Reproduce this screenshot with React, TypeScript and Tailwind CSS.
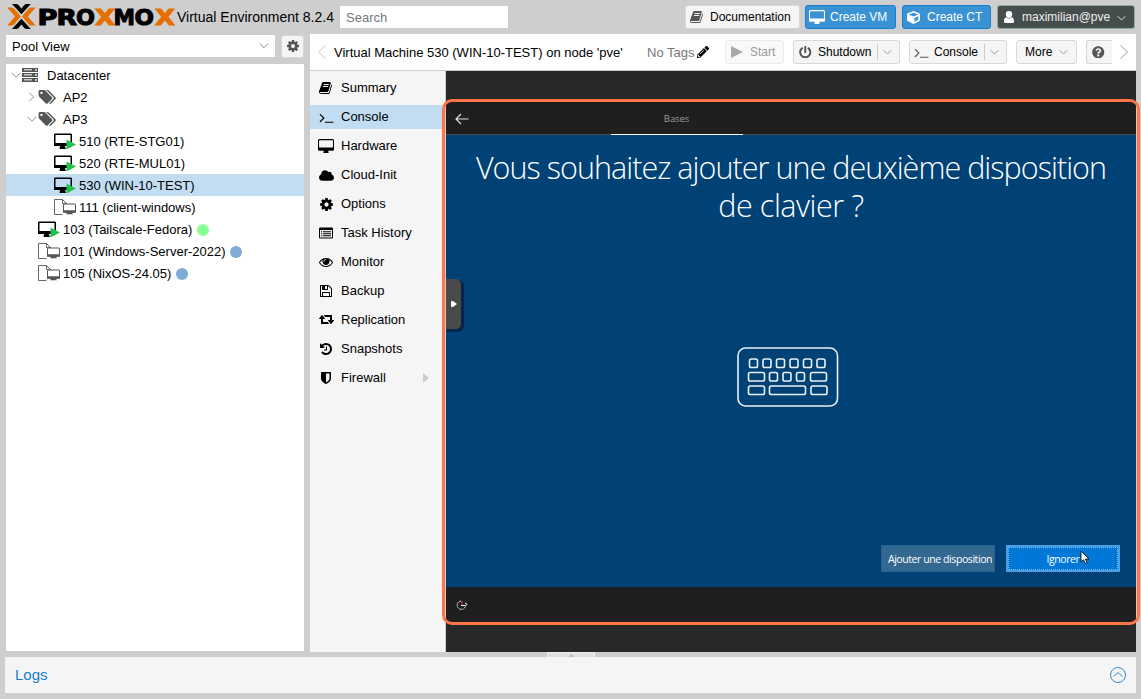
import React from "react";
import { FaCloud, FaCube, FaPencilAlt, FaPowerOff, FaQuestionCircle } from "react-icons/fa";

const PATHS = {
  book: "M1639 478q40 57 18 129l-275 906q-19 64-76.5 107.5t-122.5 43.5h-923q-77 0-148.5-53.5t-99.5-131.5q-24-67-2-127 0-4 3-27t4-37q1-8-3-21.5t-3-19.5q2-11 8-21t16.5-23.5 16.5-23.5q23-38 45-91.5t30-91.5q3-10 .5-30t-.5-28q3-11 17-28t17-23q21-36 42-92t25-90q1-9-2.5-32t.5-28q4-13 22-30.5t22-22.5q19-26 42.5-84.5t27.5-96.5q1-8-3-25.5t-2-26.5q2-8 9-18t18-23 17-21q8-12 16.5-30.5t15-35 16-36 19.5-32 26.5-23.5 36-11.5 47.5 5.5l-1 3q38-9 51-9h761q74 0 114 56t18 130l-274 906q-36 119-71.5 153.5t-128.5 34.5h-869q-27 0-38 15-11 16-1 43 24 70 144 70h923q29 0 56-15.5t35-41.5l300-987q7-22 5-57 38 15 59 43zm-1064 2q-4 13 2 22.5t20 9.5h608q13 0 25.5-9.5t16.5-22.5l21-64q4-13-2-22.5t-20-9.5h-608q-13 0-25.5 9.5t-16.5 22.5zm-83 256q-4 13 2 22.5t20 9.5h608q13 0 25.5-9.5t16.5-22.5l21-64q4-13-2-22.5t-20-9.5h-608q-13 0-25.5 9.5t-16.5 22.5z",
  terminal: "M649 983l-466 466q-10 10-23 10t-23-10l-50-50q-10-10-10-23t10-23l393-393-393-393q-10-10-10-23t10-23l50-50q10-10 23-10t23 10l466 466q10 10 10 23t-10 23zm1079 457v64q0 14-9 23t-23 9h-960q-14 0-23-9t-9-23v-64q0-14 9-23t23-9h960q14 0 23 9t9 23z",
  desktop: "M1728 992v-832q0-13-9.5-22.5t-22.5-9.5h-1600q-13 0-22.5 9.5t-9.5 22.5v832q0 13 9.5 22.5t22.5 9.5h1600q13 0 22.5-9.5t9.5-22.5zm128-832v1088q0 66-47 113t-113 47h-544q0 37 16 77.5t32 71 16 43.5q0 26-19 45t-45 19h-512q-26 0-45-19t-19-45q0-14 16-44t32-70 16-78h-544q-66 0-113-47t-47-113v-1088q0-66 47-113t113-47h1600q66 0 113 47t47 113z",
  cog: "M1152 896q0-106-75-181t-181-75-181 75-75 181 75 181 181 75 181-75 75-181zm512-109v222q0 12-8 23t-20 13l-185 28q-19 54-39 91 35 50 107 138 10 12 10 25t-9 23q-27 37-99 108t-94 71q-12 0-26-9l-138-108q-44 23-91 38-16 136-29 186-7 28-36 28h-222q-14 0-24.5-8.5t-11.5-21.5l-28-184q-49-16-90-37l-141 107q-10 9-25 9-14 0-25-11-126-114-165-168-7-10-7-23 0-12 8-23 15-21 51-66.5t54-70.5q-27-50-41-99l-183-27q-13-2-21-12.5t-8-23.5v-222q0-12 8-23t19-13l186-28q14-46 39-92-40-57-107-138-10-12-10-24 0-10 9-23 26-36 98.5-107.5t94.5-71.5q13 0 26 10l138 107q44-23 91-38 16-136 29-186 7-28 36-28h222q14 0 24.5 8.5t11.5 21.5l28 184q49 16 90 37l142-107q9-9 24-9 13 0 25 10 129 119 165 170 7 8 7 22 0 12-8 23-15 21-51 66.5t-54 70.5q26 50 41 98l183 28q13 2 21 12.5t8 23.5z",
  eye: "M1664 960q-152-236-381-353 61 104 61 225 0 185-131.5 316.5t-316.5 131.5-316.5-131.5-131.5-316.5q0-121 61-225-229 117-381 353 133 205 333.5 326.5t434.5 121.5 434.5-121.5 333.5-326.5zm-720-384q0-20-14-34t-34-14q-125 0-214.5 89.5t-89.5 214.5q0 20 14 34t34 14 34-14 14-34q0-86 61-147t147-61q20 0 34-14t14-34zm848 384q0 34-20 69-140 230-376.5 368.5t-499.5 138.5-499.5-139-376.5-368q-20-35-20-69t20-69q140-229 376.5-368t499.5-139 499.5 139 376.5 368q20 35 20 69z",
  floppy: "M512 1536h768v-384h-768v384zm896 0h128v-896q0-14-10-38.5t-20-34.5l-281-281q-10-10-34-20t-39-10v416q0 40-28 68t-68 28h-576q-40 0-68-28t-28-68v-416h-128v1280h128v-416q0-40 28-68t68-28h832q40 0 68 28t28 68v416zm-384-928v-320q0-13-9.5-22.5t-22.5-9.5h-192q-13 0-22.5 9.5t-9.5 22.5v320q0 13 9.5 22.5t22.5 9.5h192q13 0 22.5-9.5t9.5-22.5zm640 32v928q0 40-28 68t-68 28h-1344q-40 0-68-28t-28-68v-1344q0-40 28-68t68-28h928q40 0 88 20t76 48l280 280q28 28 48 76t20 88z",
  retweet: "M1280 1504q0 13-9.5 22.5t-22.5 9.5h-960q-8 0-13.5-2t-9-7-5.5-8-3-11.5-1-11.5v-600h-192q-26 0-45-19t-19-45q0-24 15-41l320-384q19-22 49-22t49 22l320 384q15 17 15 41 0 26-19 45t-45 19h-192v384h576q16 0 25 11l160 192q7 10 7 21zm640-416q0 24-15 41l-320 384q-20 23-49 23t-49-23l-320-384q-15-17-15-41 0-26 19-45t45-19h192v-384h-576q-16 0-25-12l-160-192q-7-9-7-20 0-13 9.5-22.5t22.5-9.5h960q8 0 13.5 2t9 7 5.5 8 3 11.5 1 11.5v600h192q26 0 45 19t19 45z",
  history: "M1664 896q0 156-61 298t-164 245-245 164-298 61q-172 0-327-72.5t-264-204.5q-7-10-6.5-22.5t8.5-20.5l137-138q10-9 25-9 16 2 23 12 73 95 179 147t225 52q104 0 198.5-40.5t163.5-109.5 109.5-163.5 40.5-198.5-40.5-198.5-109.5-163.5-163.5-109.5-198.5-40.5q-98 0-188 35.5t-160 101.5l137 138q31 30 14 69-17 40-59 40h-448q-26 0-45-19t-19-45v-448q0-42 40-59 39-17 69 14l130 129q107-101 244.5-156.5t284.5-55.5q156 0 298 61t245 164 164 245 61 298zm-640-288v448q0 14-9 23t-23 9h-320q-14 0-23-9t-9-23v-64q0-14 9-23t23-9h224v-352q0-14 9-23t23-9h64q14 0 23 9t9 23z",
  shield: "M1344 960v-640h-448v1137q119-63 213-137 235-184 235-360zm192-768v768q0 86-33.5 170.5t-83 150-118 127.5-126.5 103-121 77.5-89.5 49.5-42.5 20q-12 6-26 6t-26-6q-16-7-42.5-20t-89.5-49.5-121-77.5-126.5-103-118-127.5-83-150-33.5-170.5v-768q0-26 19-45t45-19h1152q26 0 45 19t19 45z",
  tags: "M576 448q0-53-37.5-90.5t-90.5-37.5-90.5 37.5-37.5 90.5 37.5 90.5 90.5 37.5 90.5-37.5 37.5-90.5zm1067 576q0 53-37 90l-491 492q-39 37-91 37-53 0-90-37l-715-716q-38-37-64.5-101t-26.5-117v-416q0-52 38-90t90-38h416q53 0 117 26.5t102 64.5l715 714q37 39 37 91zm384 0q0 53-37 90l-491 492q-39 37-91 37-36 0-59-14t-53-45l470-470q37-37 37-90 0-52-37-91l-715-714q-38-38-102-64.5t-117-26.5h224q53 0 117 26.5t102 64.5l715 714q37 39 37 91z",
};

type Glyph = keyof typeof PATHS;

function Icon({ name, className = "size-[14px]", box = "0 0 1792 1792" }: { name: Glyph; className?: string; box?: string }) {
  return (
    <svg viewBox={box} className={`shrink-0 ${className}`} fill="currentColor" aria-hidden>
      <path d={PATHS[name]} />
    </svg>
  );
}

const Desktop = ({ className = "h-[14px] w-4" }: { className?: string }) => (
  <Icon name="desktop" box="-64 0 1920 1664" className={className} />
);

function Chevron({ dir, className }: { dir: "down" | "left" | "right"; className: string }) {
  const d = { down: "M1 3l5 5 5-5", left: "M9 1l-6 5 6 5", right: "M3 1l6 5-6 5" }[dir];
  return (
    <svg viewBox="0 0 12 12" preserveAspectRatio="none" className={`shrink-0 ${className}`} fill="none" stroke="currentColor" aria-hidden>
      <path d={d} vectorEffect="non-scaling-stroke" />
    </svg>
  );
}

function Logo() {
  const letters: [string, number, number, string][] = [
    ["P", 30.5, 20, "#000"],
    ["R", 49.5, 20.5, "#000"],
    ["O", 69, 19, "#000"],
    ["X", 88, 20, "#e57000"],
    ["M", 106.500, 21.5, "#000"],
    ["O", 127.500, 19.500, "#000"],
    ["X", 148, 20, "#e57000"],
  ];
  return (
    <svg className="h-[34px] w-[168px] shrink-0" viewBox="0 0 168 34" aria-label="PROXMOX">
      <path fill="#e57000" d="M.2 7.500H4.500q1.500 0 2.500 1.100L13.900 16.500 7 24.500q-1 1.100-2.500 1.100H.2l7.800-9.100zM28.600 7.500h-4.300q-1.500 0-2.500 1.100L15 16.500l6.800 8q1 1.100 2.500 1.100h4.300l-7.800-9.100z" />
      <path fill="#000" d="M5 4h4q1.500 0 2.500 1.100l2.900 3.300 2.900-3.300Q18.300 4 19.800 4h4l-9.400 10.300zM5 29h4q1.500 0 2.500-1.100l2.900-3.300 2.900 3.300q1 1.100 2.500 1.100h4l-9.400-10.300z" />
      {letters.map(([c, x, w, fill], i) => (
        <text key={i} x={x} y="24.500" textLength={w} lengthAdjust="spacingAndGlyphs" fill={fill} stroke={fill} strokeWidth="1" className="font-['DejaVu_Sans',sans-serif] text-[21px] font-bold">
          {c}
        </text>
      ))}
    </svg>
  );
}

function Server() {
  return (
    <svg viewBox="0 0 17 14" className="h-[14px] w-[17px] shrink-0" aria-hidden>
      {[0, 5, 10].map((y) => (
        <g key={y}>
          <rect x="0" y={y} width="16" height="4" fill="#555" />
          <rect x="2" y={y + 1} width="8" height="1.500" fill="#ccc" />
          <rect x="13" y={y + 1} width="2" height="2" fill="#ccc" />
        </g>
      ))}
    </svg>
  );
}

function RunningVm() {
  return (
    <svg viewBox="0 0 22 17" className="mt-px h-[17px] w-[22px] shrink-0" aria-hidden>
      <rect x=".75" y="1.250" width="16.500" height="11" rx=".5" fill="none" stroke="#000" strokeWidth="1.500" />
      <path d="M0 10h17v3H0zM6 13h5l1 3H5.500z" fill="#000" />
      <path d="M12.500 6.500v10l9.500-5z" fill="#22c04d" />
    </svg>
  );
}

function TemplateVm() {
  return (
    <svg viewBox="0 0 22 17" className="mt-px h-[17px] w-[22px] shrink-0" aria-hidden>
      <path d="M8.500 15.500h-8V.5h8l4 4V5M8.500 .5v4h4" fill="none" stroke="#666" />
      <rect x="9.500" y="5" width="12" height="8" rx=".5" fill="#fff" stroke="#555" />
      <path d="M9 11.200h13v2.500h-4l1 1.600h-7l1-1.600H9z" fill="#555" />
    </svg>
  );
}

type Node = { icon: "dc" | "pool" | "run" | "tpl"; label: string; arrow?: "down" | "right"; depth: 0 | 1 | 2 | 3; dot?: string; on?: boolean };

const TREE: Node[] = [
  { icon: "dc", label: "Datacenter", arrow: "down", depth: 0 },
  { icon: "pool", label: "AP2", arrow: "right", depth: 1 },
  { icon: "pool", label: "AP3", arrow: "down", depth: 1 },
  { icon: "run", label: "510 (RTE-STG01)", depth: 3 },
  { icon: "run", label: "520 (RTE-MUL01)", depth: 3 },
  { icon: "run", label: "530 (WIN-10-TEST)", depth: 3, on: true },
  { icon: "tpl", label: "111 (client-windows)", depth: 3 },
  { icon: "run", label: "103 (Tailscale-Fedora)", depth: 2, dot: "bg-[#8cff94]" },
  { icon: "tpl", label: "101 (Windows-Server-2022)", depth: 2, dot: "bg-[#7eacd7]" },
  { icon: "tpl", label: "105 (NixOS-24.05)", depth: 2, dot: "bg-[#7eacd7]" },
];

const INDENT = ["pl-1", "pl-5", "pl-8", "pl-12"];

function TreeRow({ n }: { n: Node }) {
  return (
    <div className={`flex h-[22px] items-center ${INDENT[n.depth]} ${n.on ? "bg-[#c2ddf2]" : ""}`}>
      {n.arrow && (
        <span className="flex w-3 justify-center text-[#999]">
          <Chevron dir={n.arrow} className={n.arrow === "down" ? "mt-px h-[11px] w-[10px]" : "mr-px h-[10px] w-[9px]"} />
        </span>
      )}
      <span className="flex w-[25px] text-[#555]">
        {n.icon === "dc" && <Server />}
        {n.icon === "pool" && <Icon name="tags" box="64 128 1984 1536" className="h-[14px] w-[18px]" />}
        {n.icon === "run" && <RunningVm />}
        {n.icon === "tpl" && <TemplateVm />}
      </span>
      <span>{n.label}</span>
      {n.dot && <span className={`mt-px ml-[4.500px] size-3 rounded-full ${n.dot}`} />}
    </div>
  );
}

function ListAlt() {
  return (
    <svg viewBox="0 0 14 12" className="h-3 w-[14px]" aria-hidden>
      <path fillRule="evenodd" d="M1 .5h12q1 0 1 1v9q0 1-1 1H1q-1 0-1-1v-9q0-1 1-1zM1 3v7.500h12V3z" />
      <path d="M2 4.200h1.200v1H2zM4 4.200h8v1H4zM2 6.200h1.200v1H2zM4 6.200h8v1H4zM2 8.200h1.200v1H2zM4 8.200h8v1H4z" />
    </svg>
  );
}

const MENU: [string, React.ReactNode][] = [
  ["Summary", <Icon name="book" />],
  ["Console", <Icon name="terminal" className="size-[15px]" />],
  ["Hardware", <Desktop />],
  ["Cloud-Init", <FaCloud className="h-[15px] w-[15px]" />],
  ["Options", <Icon name="cog" className="size-[15px]" />],
  ["Task History", <ListAlt />],
  ["Monitor", <Icon name="eye" />],
  ["Backup", <Icon name="floppy" />],
  ["Replication", <Icon name="retweet" box="0 128 1920 1792" className="h-[14px] w-[15px]" />],
  ["Snapshots", <Icon name="history" />],
  ["Firewall", <Icon name="shield" />],
];

const GREY = "flex h-6 shrink-0 items-center rounded-[3px] border border-[#d8d8d8] bg-[#f5f5f5] text-[#555]";
const BLUE = "flex h-6 shrink-0 items-center rounded-[3px] border border-[#157fcc] bg-[#3892d4] text-white";

function Header() {
  return (
    <header className="flex h-[34px] shrink-0 items-center pl-[7px]">
      <Logo />
      <span className="ml-[2px] w-[163px] shrink-0 whitespace-nowrap text-[14px]">Virtual Environment 8.2.4</span>
      <div className="flex h-[22px] w-[168px] items-center bg-white pl-1.5 text-[#777]">Search</div>
      <div className={`${GREY} ml-[177px] w-[115px] pl-[4px]`}>
        <Icon name="book" />
        <span className="ml-[6px] text-[12px] text-black">Documentation</span>
      </div>
      <div className={`${BLUE} ml-[5px] w-[91px] pl-[3px]`}>
        <Desktop className="h-[14px] w-4" />
        <span className="ml-[5px] text-[12px]">Create VM</span>
      </div>
      <div className={`${BLUE} ml-[6px] w-[89px] pl-[4px]`}>
        <FaCube className="size-[13px]" />
        <span className="ml-[7px] text-[12px]">Create CT</span>
      </div>
      <div className="ml-[6px] flex h-6 w-[138px] shrink-0 items-center rounded-[3px] border border-[#8fa8a0] bg-[#464d4d] pl-[5px] text-white">
        <svg viewBox="0 0 12 14" className="h-[14px] w-3" fill="currentColor" aria-hidden>
          <path d="M6 1a3.200 3.200 0 0 1 3.200 3.200C9.200 6.200 7.800 8 6 8S2.800 6.200 2.800 4.200A3.200 3.200 0 0 1 6 1zM3.300 7.300Q6 9.800 8.700 7.300C10.500 7.500 11 9.500 11 11.500 11 12.500 10.300 13 9.500 13h-7C1.700 13 1 12.500 1 11.500c0-2 .5-4 2.300-4.200z" />
        </svg>
        <span className="ml-[7px] text-[12px] text-[#eee]">maximilian@pve</span>
        <Chevron dir="down" className="mt-[3px] ml-[7px] h-[9px] w-[9px] text-[#ddd]" />
      </div>
    </header>
  );
}

function SplitArrow({ className }: { className: string }) {
  return (
    <span className={`flex h-4 items-center border-l border-[#ccc] pl-[5px] text-[#999] ${className}`}>
      <Chevron dir="down" className="mt-px size-[9px]" />
    </span>
  );
}

function TitleBar() {
  return (
    <div className="flex h-[37px] shrink-0 items-center border-b border-[#cfcfcf] bg-white">
      <Chevron dir="left" className="ml-[5px] h-4 w-[14px] text-[#ccc]" />
      <span className="ml-[5px] w-[313px] shrink-0 whitespace-nowrap">Virtual Machine 530 (WIN-10-TEST) on node 'pve'</span>
      <span className="w-[50px] shrink-0 whitespace-nowrap text-[#777]">No Tags</span>
      <FaPencilAlt className="size-[12px] shrink-0" />
      <div className={`${GREY} ml-[16px] w-[59px] pl-[5px] opacity-50`}>
        <svg viewBox="0 0 12 12" className="h-3 w-3" fill="currentColor" aria-hidden><path d="M0 0l12 6-12 6z" /></svg>
        <span className="ml-[7px] text-[12px] text-[#333]">Start</span>
      </div>
      <div className={`${GREY} ml-[9px] w-[107px] pl-[5px]`}>
        <FaPowerOff className="size-[12.500px]" />
        <span className="ml-[6.500px] w-[59px] text-[12px] text-black">Shutdown</span>
        <SplitArrow className="w-[22px]" />
      </div>
      <div className={`${GREY} ml-[9px] w-[98px] pl-[4px]`}>
        <Icon name="terminal" className="size-[15px]" />
        <span className="ml-[5px] w-[50px] text-[12px] text-black">Console</span>
        <SplitArrow className="w-[20px]" />
      </div>
      <div className={`${GREY} ml-[9px] w-[61px] pl-[8px]`}>
        <span className="w-[34px] text-[12px] text-black">More</span>
        <Chevron dir="down" className="mt-px size-[9px] text-[#999]" />
      </div>
      <div className="ml-[9px] flex h-6 w-[26px] shrink-0 items-center rounded-l-[3px] border border-r-0 border-[#d8d8d8] bg-[#f5f5f5] pl-[5px] text-[#555]">
        <FaQuestionCircle className="size-[12.500px]" />
      </div>
      <Chevron dir="right" className="ml-[5px] h-4 w-[14px] text-[#999]" />
    </div>
  );
}

function Keyboard() {
  const keys: [number, number, number][] = [
    [12.5, 12, 8], [26, 12, 8], [39.500, 12, 8], [53, 12, 8], [66.500, 12, 8], [80, 12, 8],
    [11.500, 25.500, 16], [32.500, 25.500, 8], [46, 25.500, 8], [59.500, 25.500, 8], [73.500, 25.500, 16],
    [11.500, 39, 16], [32.500, 39, 36], [74, 39, 16],
  ];
  return (
    <svg viewBox="0 0 102 60" className="h-[60px] w-[102px]" fill="none" stroke="#e9f1f6" strokeWidth="1.600" aria-hidden>
      <rect x="1" y="1" width="99.500" height="58" rx="7.500" />
      {keys.map(([x, y, w], i) => <rect key={i} x={x} y={y} width={w} height="8.500" rx="1.800" />)}
    </svg>
  );
}

function GuestScreen() {
  return (
    <div className="relative flex min-w-0 flex-1 flex-col bg-[#282828] pt-[29px] pb-[28px] font-['Open_Sans','Noto_Sans',sans-serif] text-white">
      <div className="flex h-[35px] shrink-0 flex-col justify-end bg-[#1f1f1f]">
        <div className="flex flex-1 items-center pt-[4px]">
          <svg viewBox="0 0 14 12" className="ml-[9px] h-3 w-[14px]" fill="none" stroke="#e6e0d4" strokeWidth="1.200" aria-hidden><path d="M13.500 6H1M6 1L1 6l5 5" /></svg>
          <span className="ml-[142px] w-[131px] text-center text-[9.500px] leading-none tracking-[-0.1px] text-[#999]">Bases</span>
        </div>
        <div className="h-[1.500px] bg-[#4a4a4a]"><div className="ml-[165px] h-full w-[132px] bg-white" /></div>
      </div>
      <div className="flex min-h-0 flex-1 flex-col items-center bg-[#004275]">
        <h1 className="mt-[13px] w-[690px] text-center text-[30.500px] leading-[38px] font-light whitespace-nowrap">
          <span className="block tracking-[-0.95px]">Vous souhaitez ajouter une deuxième disposition</span>
          <span className="block pr-0 tracking-[-0.45px]">de clavier ?</span>
        </h1>
        <div className="mt-[123px] ml-[-7px]"><Keyboard /></div>
        <div className="mt-[138px] flex self-end pr-4 text-[10.500px] tracking-[-0.42px]">
          <div className="flex h-[27px] w-[114px] items-center justify-center border border-[#2a618f] bg-[#336891] pl-1 whitespace-nowrap">
            <span className="pt-[2px]">Ajouter une disposition</span>
          </div>
          <div className="relative ml-[11px] flex h-[27px] w-[114px] border-2 border-[#4b9fe4] bg-[#0078d7]">
            <span className="flex flex-1 items-center justify-center border border-dotted border-[#7cbcf0] pt-px">Ignorer</span>
            <svg viewBox="0 0 10 14" className="absolute top-[3px] left-[72px] h-[14px] w-[10px]" aria-hidden>
              <path d="M1 1v11l2.500-2.300L5.300 13.500l1.800-.9-1.700-3.500H9z" fill="#fff" stroke="#111" strokeWidth=".9" />
            </svg>
          </div>
        </div>
      </div>
      <div className="flex h-[37px] shrink-0 items-center bg-[#1f1f1f] pl-[10px]">
        <svg viewBox="0 0 12 11" className="mb-px h-[11px] w-3" fill="none" aria-hidden>
          <path d="M5 1A4.200 4.200 0 1 0 9.500 6" stroke="#ddd" strokeDasharray="2 .5" />
          <path d="M6 1v4" stroke="#e04444" strokeWidth="1" /><path d="M5 5.500h4.500l1.500-1M9 3l2.300 1.500" stroke="#eee" />
        </svg>
      </div>
      <div className="absolute top-[208px] left-0 flex h-[50px] w-[15px] items-center rounded-r-[5px] bg-[#4a4a4a] pl-[5px] shadow-[2px_2px_0_1px_#04264a]">
        <svg viewBox="0 0 6 6" className="size-[6px]" fill="#fff" aria-hidden><path d="M0 0h2l4 3-4 3H0z" /></svg>
      </div>
      <div className="pointer-events-none absolute top-[28px] left-[-4px] h-[526px] w-[698px] rounded-[10px] border-[3px] border-[#ff7547]" />
    </div>
  );
}

export default function App() {
  return (
    <div className="flex h-[699px] w-[1141px] flex-col overflow-hidden bg-[#cecece] font-['Liberation_Sans',Arial,sans-serif] text-[13px] leading-none text-black">
      <Header />
      <div className="flex h-[618px] shrink-0 pr-[5px] pl-[6px]">
        <aside className="flex w-[298px] shrink-0 flex-col">
          <div className="flex pt-[1px]">
            <div className="flex h-[22px] w-[269px] items-center justify-between bg-white pr-[6px] pl-1.5">
              Pool View <Chevron dir="down" className="size-[10px] text-[#888]" />
            </div>
            <div className={`${GREY} ml-[6px] h-[23px] w-[23px] justify-center`}><Icon name="cog" className="mb-px size-[14px]" /></div>
          </div>
          <div className="mt-[6px] mb-[1px] flex-1 bg-white">
            {TREE.map((n) => <TreeRow key={n.label} n={n} />)}
          </div>
        </aside>
        <main className="ml-[6px] flex min-w-0 flex-1 flex-col">
          <TitleBar />
          <div className="flex min-h-0 flex-1">
            <nav className="flex w-[136px] shrink-0 flex-col gap-[5px] border-r border-[#cfcfcf] bg-[#f5f5f5] pt-[5px]">
              {MENU.map(([label, icon]) => (
                <div key={label} className={`flex h-6 shrink-0 items-center pl-2 ${label === "Console" ? "bg-[#c2ddf2]" : ""}`}>
                  <span className="flex w-4 justify-center">{icon}</span>
                  <span className="ml-[7px] flex-1 pb-[2px]">{label}</span>
                  {label === "Firewall" && <svg viewBox="0 0 6 10" className="mr-4 mb-px h-[10px] w-[6px]" fill="#ccc" aria-hidden><path d="M0 0l6 5-6 5z" /></svg>}
                </div>
              ))}
            </nav>
            <GuestScreen />
          </div>
        </main>
      </div>
      <div className="flex h-[5px] shrink-0 pl-[547px]">
        <div className="flex w-[48px] items-end justify-center border border-b-0 border-[#eee] bg-[#e0e0e0]">
          <svg viewBox="0 0 8 4" className="h-[3px] w-[7px]" fill="#bbb" aria-hidden><path d="M0 4l4-4 4 4z" /></svg>
        </div>
      </div>
      <footer className="mr-[5px] ml-[5px] flex h-[36px] shrink-0 items-center justify-between bg-[#f5f5f5] pr-[9px] pl-[10px] text-[15px] text-[#157fcc]">
        <span className="pb-px">Logs</span>
        <svg viewBox="0 0 18 18" className="size-[18px]" fill="none" stroke="#3b8bc9" aria-hidden><circle cx="9" cy="9" r="7.500" /><path d="M4.500 10.500L9 6.500l4.500 4" /></svg>
      </footer>
    </div>
  );
}
